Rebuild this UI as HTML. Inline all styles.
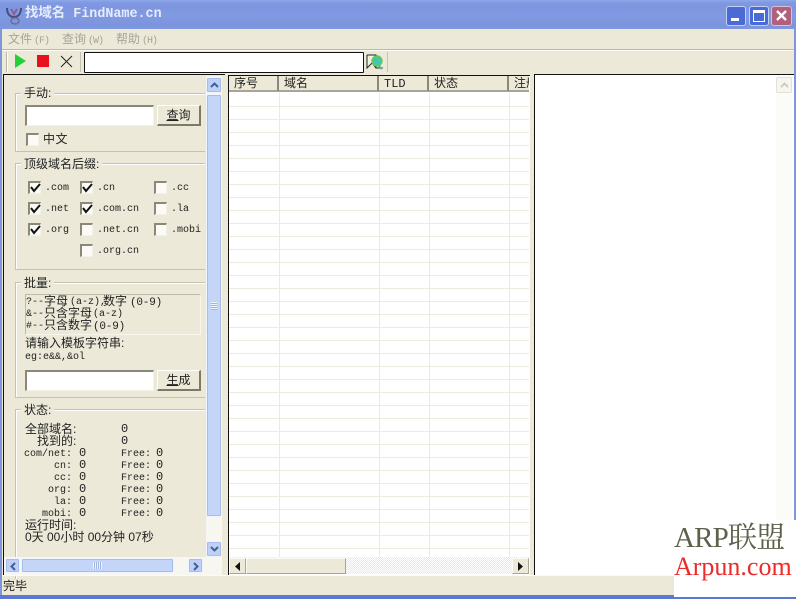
<!DOCTYPE html>
<html><head><meta charset="utf-8"><style>
html,body{margin:0;padding:0;background:#ece9d8}
#w{position:relative;width:796px;height:599px;overflow:hidden;background:#ece9d8;font-family:"Liberation Sans","WenQuanYi Zen Hei","Noto Sans CJK SC",sans-serif;font-size:12px;color:#222}
#w div,#w span.a{position:absolute;white-space:pre;box-sizing:border-box}
.m{font-family:"Liberation Mono","WenQuanYi Zen Hei","Noto Sans CJK SC",monospace;font-size:10px;line-height:12px}
.d{font-family:"Liberation Mono",monospace;font-size:12px;line-height:12px}
.r{text-align:right;width:60px;left:12px}
.t{font-size:12px;line-height:13px}
.g{border:1px solid #c5c2b0;border-right:none;box-shadow:inset 1px 1px 0 #fff}
.gl{background:#ece9d8;padding:0 3px;font-size:12px;line-height:14px}
.inp{background:#fff;border-top:2px solid #8a8878;border-left:2px solid #8a8878;border-right:1px solid #f4f2e8;border-bottom:1px solid #f4f2e8}
.btn{background:#ece9d8;border-top:1px solid #fff;border-left:1px solid #fff;border-right:2px solid #7b7968;border-bottom:2px solid #7b7968;text-align:center;font-size:12px;line-height:18px}
.tb{background:#ece9d8;border:1px solid #fbfaf3;border-right-color:#a8a594;border-bottom-color:#a8a594}
.cb{width:13px;height:13px;background:#fbfaf5;border-top:2px solid #8a8878;border-left:2px solid #8a8878;border-right:1px solid #f4f2e8;border-bottom:1px solid #f4f2e8}
.cb svg{position:absolute;left:0;top:0}
.sb{background:#c5d5f7;border:1px solid #eef3fd;box-shadow:0 0 0 1px #a9bdea inset;border-radius:2px}
.hd{top:76px;height:16px;background:#ece9d8;border-right:2px solid #8a8878;border-bottom:2px solid #a8a594;font-size:12px;line-height:15px;padding-left:5px;overflow:hidden}
.k{font-family:"Liberation Mono",monospace;font-size:10px;letter-spacing:-1px;margin-left:2px}
</style></head><body><div id="w">

<!-- title bar -->
<div style="left:0;top:0;width:796px;height:29px;background:linear-gradient(180deg,#8fa8ea 0,#7f98e0 3px,#7e96df 8px,#809ae2 16px,#7c94dd 25px,#7e97df 29px)"></div>
<svg style="position:absolute;left:4px;top:6px" width="20" height="20" viewBox="0 0 20 20"><path d="M3 2c0 6 3 9 7 9s7-3 7-9" fill="none" stroke="#45507f" stroke-width="2"/><path d="M7 3l3 5 3-5" fill="none" stroke="#8f5f90" stroke-width="2"/><ellipse cx="11" cy="15" rx="4" ry="3" fill="none" stroke="#6a7097" stroke-width="1.5"/></svg>
<div style="left:25px;top:7px;color:#e6ecfb;font-size:13.400px;line-height:16px;font-weight:bold;font-family:'Liberation Mono','WenQuanYi Zen Hei','Noto Sans CJK SC',monospace">找域名 FindName.cn</div>
<div style="left:726px;top:6px;width:20px;height:20px;background:#4a6bd6;border:1px solid #c3d0f2;border-radius:3px"><div style="left:4px;top:11px;width:8px;height:3px;background:#fff"></div></div>
<div style="left:749px;top:6px;width:20px;height:20px;background:#4a6bd6;border:1px solid #c3d0f2;border-radius:3px"><div style="left:3px;top:3px;width:12px;height:12px;border:1px solid #fff;border-top:3px solid #fff"></div></div>
<div style="left:771px;top:6px;width:21px;height:20px;background:#b0607c;border:1px solid #d8c0d0;border-radius:3px"><svg style="position:absolute;left:2px;top:2px" width="15" height="14"><path d="M3 2l9 9M12 2l-9 9" stroke="#fff" stroke-width="2.4"/></svg></div>

<!-- window borders -->
<div style="left:0;top:29px;width:2px;height:570px;background:#7f96de"></div>
<div style="left:794px;top:29px;width:2px;height:570px;background:#7f96de"></div>
<div style="left:0;top:595px;width:796px;height:4px;background:#5a78d4"></div>

<!-- menu -->
<div style="left:8px;top:32px;color:#a5a498;font-size:12px;line-height:14px">文件<span class="k">(F)</span></div>
<div style="left:62px;top:32px;color:#a5a498;font-size:12px;line-height:14px">查询<span class="k">(W)</span></div>
<div style="left:116px;top:32px;color:#a5a498;font-size:12px;line-height:14px">帮助<span class="k">(H)</span></div>
<div style="left:2px;top:49px;width:792px;height:2px;background:#fbfaf3;border-top:1px solid #bdbaa8"></div>

<!-- toolbar -->
<div style="left:6px;top:52px;width:2px;height:20px;background:#fff;border-left:1px solid #b8b5a4"></div>
<svg style="position:absolute;left:14px;top:54px" width="13" height="14"><path d="M1 0l11 7-11 7z" fill="#22d13a"/></svg>
<div style="left:37px;top:55px;width:12px;height:12px;background:#e8101c"></div>
<svg style="position:absolute;left:60px;top:55px" width="13" height="13"><path d="M1 1l11 11M12 1l-11 11" stroke="#222" stroke-width="1"/></svg>
<div style="left:80px;top:52px;width:1px;height:20px;background:#c5c2b0"></div>
<div style="left:84px;top:52px;width:280px;height:21px;background:#fff;border:1px solid #111;border-radius:1px"></div>
<svg style="position:absolute;left:366px;top:53px" width="18" height="18"><path d="M1 2h9v13h7M1 2v13l5-5 4 5" fill="#f0f4e8" stroke="#222"/><circle cx="11" cy="8" r="5" fill="#3fc7b0" stroke="#74c640" stroke-width="1.4"/><path d="M13 13l3 3" stroke="#6a9" stroke-width="2"/></svg>
<div style="left:387px;top:52px;width:1px;height:20px;background:#c5c2b0"></div>

<!-- left panel -->
<div style="left:3px;top:74px;width:222px;height:501px;border-left:1px solid #111;border-top:1px solid #111"></div>

<div class="g" style="left:15px;top:93px;width:190px;height:59px"></div>
<div class="gl" style="left:21px;top:86px">手动:</div>
<div class="inp" style="left:25px;top:105px;width:129px;height:21px"></div>
<div class="btn" style="left:157px;top:105px;width:44px;height:21px"><u>查</u>询</div>
<div class="cb" style="left:26px;top:133px"></div>
<div class="t" style="left:43px;top:133px;letter-spacing:.5px">中文</div>

<div class="g" style="left:15px;top:163px;width:190px;height:107px"></div>
<div class="gl" style="left:21px;top:157px">顶级域名后缀:</div>
<div class="cb" style="left:28px;top:181px"><svg width="11" height="11"><path d="M1 4l3 4 6-7" fill="none" stroke="#111" stroke-width="2"/></svg></div>
<div class="cb" style="left:28px;top:202px"><svg width="11" height="11"><path d="M1 4l3 4 6-7" fill="none" stroke="#111" stroke-width="2"/></svg></div>
<div class="cb" style="left:28px;top:223px"><svg width="11" height="11"><path d="M1 4l3 4 6-7" fill="none" stroke="#111" stroke-width="2"/></svg></div>
<div class="cb" style="left:80px;top:181px"><svg width="11" height="11"><path d="M1 4l3 4 6-7" fill="none" stroke="#111" stroke-width="2"/></svg></div>
<div class="cb" style="left:80px;top:202px"><svg width="11" height="11"><path d="M1 4l3 4 6-7" fill="none" stroke="#111" stroke-width="2"/></svg></div>
<div class="cb" style="left:80px;top:223px"></div>
<div class="cb" style="left:80px;top:244px"></div>
<div class="cb" style="left:154px;top:181px"></div>
<div class="cb" style="left:154px;top:202px"></div>
<div class="cb" style="left:154px;top:223px"></div>
<div class="m" style="left:45px;top:183px">.com</div>
<div class="m" style="left:45px;top:204px">.net</div>
<div class="m" style="left:45px;top:225px">.org</div>
<div class="m" style="left:97px;top:183px">.cn</div>
<div class="m" style="left:97px;top:204px">.com.cn</div>
<div class="m" style="left:97px;top:225px">.net.cn</div>
<div class="m" style="left:97px;top:246px">.org.cn</div>
<div class="m" style="left:171px;top:183px">.cc</div>
<div class="m" style="left:171px;top:204px">.la</div>
<div class="m" style="left:171px;top:225px">.mobi</div>

<div class="g" style="left:15px;top:282px;width:190px;height:116px"></div>
<div class="gl" style="left:21px;top:276px">批量:</div>
<div style="left:25px;top:294px;width:176px;height:41px;border:1px solid #bdbaa8;border-right-color:#f8f6ec;border-bottom-color:#f8f6ec"></div>
<div class="m" style="left:26px;top:297px">?--</div><div class="t" style="left:44px;top:295px;line-height:12px">字母</div><div class="m" style="left:70px;top:297px">(a-z),</div><div class="t" style="left:103px;top:295px;line-height:12px">数字</div><div class="m" style="left:130px;top:297px;font-size:11px;letter-spacing:-.2px">(0-9)</div>
<div class="m" style="left:26px;top:309px">&amp;--</div><div class="t" style="left:44px;top:307px;line-height:12px">只含字母</div><div class="m" style="left:93px;top:309px">(a-z)</div>
<div class="m" style="left:26px;top:321px">#--</div><div class="t" style="left:44px;top:319px;line-height:12px">只含数字</div><div class="m" style="left:93px;top:321px;font-size:11px;letter-spacing:-.2px">(0-9)</div>
<div class="t" style="left:25px;top:337px">请输入模板字符串:</div>
<div class="m" style="left:25px;top:352px">eg:e&amp;&amp;,&amp;ol</div>
<div class="inp" style="left:25px;top:370px;width:129px;height:21px"></div>
<div class="btn" style="left:157px;top:370px;width:44px;height:21px"><u>生</u>成</div>

<div class="g" style="left:15px;top:409px;width:190px;height:170px;border-bottom:none"></div>
<div class="gl" style="left:21px;top:403px">状态:</div>
<div class="t" style="left:25px;top:423px;line-height:12px">全部域名:</div>
<div class="t" style="left:37px;top:435px;line-height:12px">找到的:</div>
<div class="d" style="left:121px;top:423px">0</div>
<div class="d" style="left:121px;top:435px">0</div>

<div class="m r" style="top:449px">com/net:</div><div class="d" style="left:79px;top:447px">0</div><div class="m" style="left:121px;top:449px">Free:</div><div class="d" style="left:156px;top:447px">0</div>
<div class="m r" style="top:461px">cn:</div><div class="d" style="left:79px;top:459px">0</div><div class="m" style="left:121px;top:461px">Free:</div><div class="d" style="left:156px;top:459px">0</div>
<div class="m r" style="top:473px">cc:</div><div class="d" style="left:79px;top:471px">0</div><div class="m" style="left:121px;top:473px">Free:</div><div class="d" style="left:156px;top:471px">0</div>
<div class="m r" style="top:485px">org:</div><div class="d" style="left:79px;top:483px">0</div><div class="m" style="left:121px;top:485px">Free:</div><div class="d" style="left:156px;top:483px">0</div>
<div class="m r" style="top:497px">la:</div><div class="d" style="left:79px;top:495px">0</div><div class="m" style="left:121px;top:497px">Free:</div><div class="d" style="left:156px;top:495px">0</div>
<div class="m r" style="top:509px">mobi:</div><div class="d" style="left:79px;top:507px">0</div><div class="m" style="left:121px;top:509px">Free:</div><div class="d" style="left:156px;top:507px">0</div>
<div class="t" style="left:25px;top:519px;line-height:12px">运行时间:</div>
<div class="t" style="left:25px;top:531px;line-height:13px">0天 00小时 00分钟 07秒</div>

<!-- left vertical scrollbar -->
<div style="left:206px;top:76px;width:16px;height:481px;background:#f7f6f0"></div>
<div class="sb" style="left:206px;top:77px;width:16px;height:16px;background:#c0d0f4"><svg style="position:absolute;left:2px;top:3px" width="11" height="8"><path d="M2 6l3.500-3.500L9 6" fill="none" stroke="#3f5fa0" stroke-width="2"/></svg></div>
<div class="sb" style="left:206px;top:94px;width:16px;height:423px"></div>
<div style="left:211px;top:302px;width:6px;height:8px;background:repeating-linear-gradient(180deg,#eef3fd 0 1px,#9fb4e0 1px 2px)"></div>
<div class="sb" style="left:206px;top:541px;width:16px;height:16px;background:#c0d0f4"><svg style="position:absolute;left:2px;top:3px" width="11" height="8"><path d="M2 2l3.500 3.500L9 2" fill="none" stroke="#3f5fa0" stroke-width="2"/></svg></div>

<!-- left horizontal scrollbar -->
<div style="left:4px;top:557px;width:218px;height:18px;background:#f7f6f0"></div>
<div class="sb" style="left:5px;top:558px;width:15px;height:15px;background:#c0d0f4"><svg style="position:absolute;left:3px;top:2px" width="8" height="11"><path d="M6 2L2.500 5.500 6 9" fill="none" stroke="#3f5fa0" stroke-width="2"/></svg></div>
<div class="sb" style="left:21px;top:558px;width:153px;height:15px"></div>
<div style="left:93px;top:562px;width:9px;height:7px;background:repeating-linear-gradient(90deg,#eef3fd 0 1px,#9fb4e0 1px 2px)"></div>
<div class="sb" style="left:188px;top:558px;width:15px;height:15px;background:#c0d0f4"><svg style="position:absolute;left:3px;top:2px" width="8" height="11"><path d="M2 2l3.500 3.500L2 9" fill="none" stroke="#3f5fa0" stroke-width="2"/></svg></div>

<!-- list -->
<div style="left:228px;top:75px;width:302px;height:500px;background-color:#fff;border-left:1px solid #111;border-top:1px solid #111"></div>
<div style="left:229px;top:94px;width:300px;height:463px;background-image:repeating-linear-gradient(180deg,#fff 0 12px,#ecebdd 12px 13px)"></div>
<div style="left:279px;top:93px;width:1px;height:464px;background:#ecebdd"></div>
<div style="left:379px;top:93px;width:1px;height:464px;background:#ecebdd"></div>
<div style="left:429px;top:93px;width:1px;height:464px;background:#ecebdd"></div>
<div style="left:509px;top:93px;width:1px;height:464px;background:#ecebdd"></div>
<div class="hd" style="left:229px;width:50px">序号</div>
<div class="hd" style="left:279px;width:100px">域名</div>
<div class="hd m" style="left:379px;width:50px;line-height:16px">TLD</div>
<div class="hd" style="left:429px;width:80px">状态</div>
<div class="hd" style="left:509px;width:20px;border-right:none">注册</div>

<!-- list hscroll -->
<div style="left:229px;top:557px;width:300px;height:17px;background:repeating-conic-gradient(#ece9d8 0 25%,#fff 0 50%) 0 0/2px 2px"></div>
<div class="tb" style="left:229px;top:558px;width:17px;height:16px"><svg style="position:absolute;left:5px;top:3px" width="6" height="9"><path d="M5 0v9L0 4.500z" fill="#111"/></svg></div>
<div class="tb" style="left:246px;top:558px;width:100px;height:16px"></div>
<div class="tb" style="left:512px;top:558px;width:17px;height:16px"><svg style="position:absolute;left:5px;top:3px" width="6" height="9"><path d="M0 0v9l5-4.500z" fill="#111"/></svg></div>

<!-- right pane -->
<div style="left:534px;top:74px;width:260px;height:501px;background:#fff;border-left:1px solid #111;border-top:1px solid #111"></div>
<div style="left:776px;top:76px;width:16px;height:499px;background:#fbfbf8"></div>
<div style="left:776px;top:77px;width:16px;height:16px;background:#f6f5ee;border:1px solid #e4e2d6;border-radius:2px"><svg style="position:absolute;left:2px;top:3px" width="11" height="8"><path d="M2 6l3.500-3.500L9 6" fill="none" stroke="#cfcdbd" stroke-width="2"/></svg></div>

<!-- status bar -->
<div style="left:2px;top:575px;width:792px;height:1px;background:#fbfaf3"></div>
<div style="left:3px;top:579px;font-size:12px;line-height:14px">完毕</div>

<!-- watermark -->
<div style="left:674px;top:520px;width:122px;height:77px;background:#fff"></div>
<div style="left:674px;top:521px;font-family:'Liberation Serif','Noto Serif CJK SC',serif;font-size:29px;line-height:34px;color:#5d604a;letter-spacing:-.8px">ARP联盟</div>
<div style="left:674px;top:553px;font-family:'Liberation Serif',serif;font-size:26px;line-height:28px;color:#ee2a2a">Arpun.com</div>
</div></body></html>
